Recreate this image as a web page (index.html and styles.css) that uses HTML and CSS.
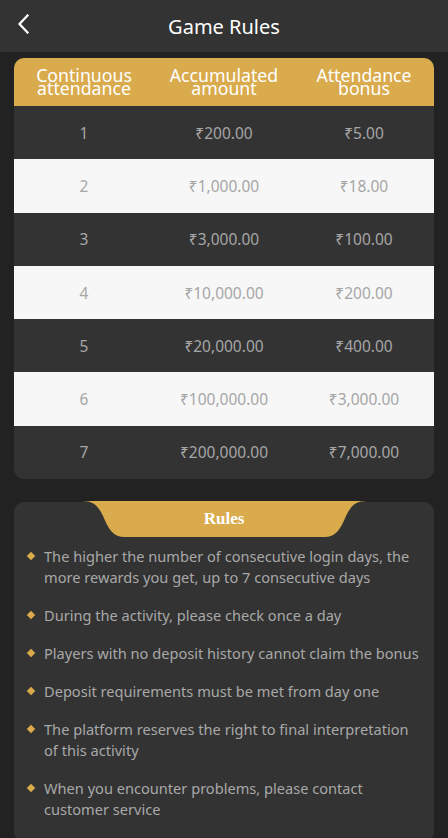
FILE: index.html
```html
<!DOCTYPE html>
<html lang="en">
<head>
<meta charset="utf-8">
<title>Game Rules</title>
<link rel="stylesheet" href="styles.css">
</head>
<body>
<header class="topbar">
  <span class="back">
    <svg width="14" height="20" viewBox="0 0 14 20"><path d="M11.5 1.5 L3.5 10 L11.5 18.5" fill="none" stroke="#fff" stroke-width="2.2" stroke-linecap="square"/></svg>
  </span>
  <h1 class="title">Game Rules</h1>
</header>
<main class="content">
  <section class="table-card">
    <div class="thead">
      <div class="th">Continuous attendance</div>
      <div class="th">Accumulated amount</div>
      <div class="th">Attendance bonus</div>
    </div>
    <div class="row dark"><div>1</div><div>₹200.00</div><div>₹5.00</div></div>
    <div class="row light"><div>2</div><div>₹1,000.00</div><div>₹18.00</div></div>
    <div class="row dark"><div>3</div><div>₹3,000.00</div><div>₹100.00</div></div>
    <div class="row light"><div>4</div><div>₹10,000.00</div><div>₹200.00</div></div>
    <div class="row dark"><div>5</div><div>₹20,000.00</div><div>₹400.00</div></div>
    <div class="row light"><div>6</div><div>₹100,000.00</div><div>₹3,000.00</div></div>
    <div class="row dark"><div>7</div><div>₹200,000.00</div><div>₹7,000.00</div></div>
  </section>
  <section class="rules-card">
    <div class="tab">
      <svg class="tab-bg" width="285" height="36" viewBox="0 0 285 36" preserveAspectRatio="none"><path d="M0 0 C12 0 16 5 21 15 C27 29 31 36 43 36 L242 36 C254 36 258 29 264 15 C269 5 273 0 285 0 Z" fill="#d9ab4d"/></svg>
      <span class="tab-label">Rules</span>
    </div>
    <ul class="rules">
      <li>The higher the number of consecutive login days, the more rewards you get, up to 7 consecutive days</li>
      <li>During the activity, please check once a day</li>
      <li>Players with no deposit history cannot claim the bonus</li>
      <li>Deposit requirements must be met from day one</li>
      <li>The platform reserves the right to final interpretation of this activity</li>
      <li>When you encounter problems, please contact customer service</li>
    </ul>
  </section>
</main>
</body>
</html>
```
FILE: styles.css
```css
* { box-sizing: border-box; }
html, body { margin: 0; padding: 0; }
body {
  background: #222222;
  font-family: "Noto Sans", "Open Sans", sans-serif;
  width: 448px;
  height: 838px;
  overflow: hidden;
}
.topbar {
  height: 52px;
  background: #333333;
  display: flex;
  align-items: center;
  justify-content: center;
  position: relative;
}
.back {
  position: absolute;
  left: 16px;
  top: 14px;
  display: flex;
}
.title {
  margin: 0;
  color: #ffffff;
  font-size: 20px;
  font-weight: 400;
}
.content {
  padding: 6px 14px 0;
}
.table-card {
  border-radius: 10px;
  overflow: hidden;
  background: #333333;
}
.thead {
  background: #d9ab4d;
  height: 48px;
  display: grid;
  grid-template-columns: 1fr 1fr 1fr;
  align-items: center;
}
.th {
  color: #ffffff;
  font-size: 17.7px;
  line-height: 13px;
  text-align: center;
  padding: 0 10px;
}
.row {
  height: 53.3px;
  display: grid;
  grid-template-columns: 1fr 1fr 1fr;
  align-items: center;
  text-align: center;
  color: #a6a6a6;
  font-size: 15.5px;
}
.row.dark { background: #333333; }
.row.light { background: #f7f7f7; }
.rules-card {
  margin-top: 23px;
  background: #333333;
  border-radius: 10px;
  padding-bottom: 20px;
  min-height: 340px;
}
.tab {
  width: 285px;
  height: 36px;
  margin: 0 auto;
  position: relative;
  display: flex;
  align-items: center;
  justify-content: center;
  top: -1px;
}
.tab-bg {
  position: absolute;
  left: 0;
  top: 0;
}
.tab-label {
  position: relative;
  color: #ffffff;
  font-family: "Liberation Serif", serif;
  font-weight: 700;
  font-size: 17px;
}
.rules {
  list-style: none;
  margin: 0;
  padding: 8px 14px 0 30px;
  display: flex;
  flex-direction: column;
  gap: 17.7px;
}
.rules li {
  position: relative;
  color: #a8a8a8;
  font-size: 14.6px;
  line-height: 20.5px;
}
.rules li::before {
  content: "";
  position: absolute;
  left: -16px;
  top: 7px;
  width: 6px;
  height: 6px;
  background: #d9ab4d;
  transform: rotate(45deg);
}
```
